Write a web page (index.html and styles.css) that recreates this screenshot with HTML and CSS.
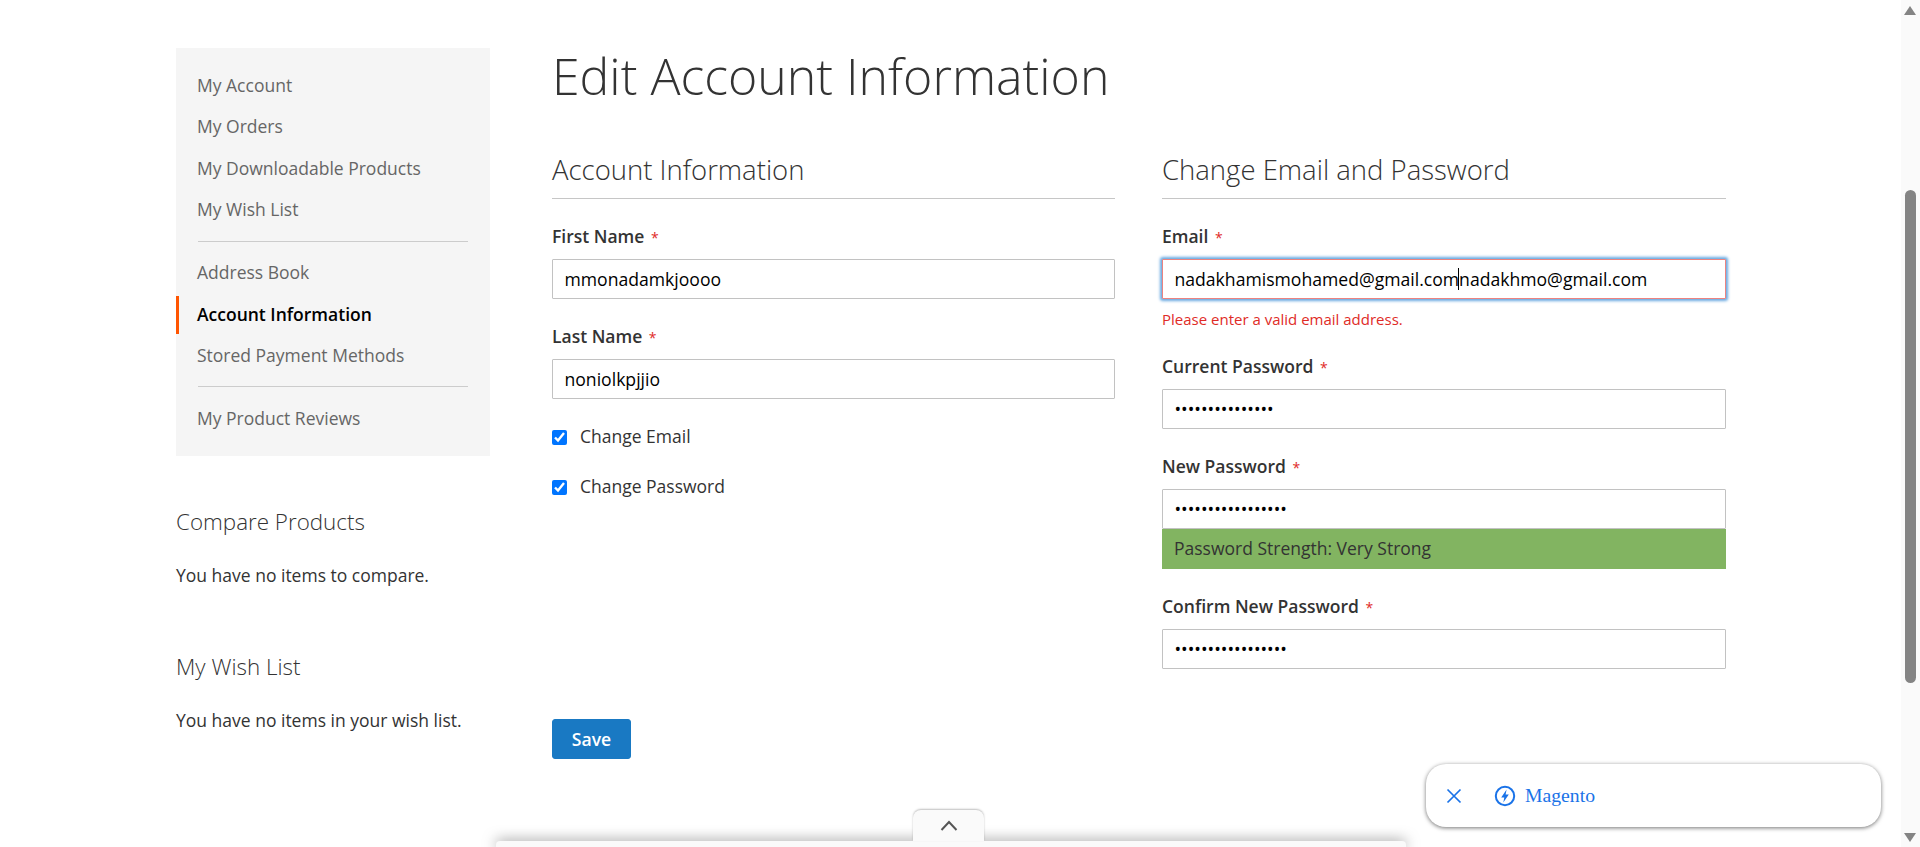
FILE: index.html
```html
<!DOCTYPE html>
<html lang="en">
<head>
<meta charset="utf-8">
<title>Edit Account Information</title>
<link rel="stylesheet" href="styles.css">
</head>
<body>
<div class="page">
  <div class="layout">
    <aside class="sidebar">
      <nav class="account-nav">
        <ul class="nav-list">
          <li class="nav-item">My Account</li>
          <li class="nav-item">My Orders</li>
          <li class="nav-item">My Downloadable Products</li>
          <li class="nav-item">My Wish List</li>
          <li class="nav-divider"></li>
          <li class="nav-item">Address Book</li>
          <li class="nav-item nav-current">Account Information</li>
          <li class="nav-item">Stored Payment Methods</li>
          <li class="nav-divider"></li>
          <li class="nav-item">My Product Reviews</li>
        </ul>
      </nav>
      <section class="side-block side-compare">
        <h2 class="side-title">Compare Products</h2>
        <p class="side-text">You have no items to compare.</p>
      </section>
      <section class="side-block side-wish">
        <h2 class="side-title">My Wish List</h2>
        <p class="side-text">You have no items in your wish list.</p>
      </section>
    </aside>
    <main class="main">
      <h1 class="page-title">Edit Account Information</h1>
      <form class="form">
        <div class="columns">
          <fieldset class="column">
            <legend class="legend">Account Information</legend>
            <div class="field">
              <label class="label" for="first">First Name <span class="req">*</span></label>
              <input class="input" id="first" type="text" value="mmonadamkjoooo">
            </div>
            <div class="field">
              <label class="label" for="last">Last Name <span class="req">*</span></label>
              <input class="input" id="last" type="text" value="noniolkpjjio">
            </div>
            <label class="check check-first"><input class="checkbox" type="checkbox" checked><span class="check-text">Change Email</span></label>
            <label class="check"><input class="checkbox" type="checkbox" checked><span class="check-text">Change Password</span></label>
          </fieldset>
          <fieldset class="column">
            <legend class="legend">Change Email and Password</legend>
            <div class="field">
              <label class="label" for="email">Email <span class="req">*</span></label>
              <div class="input-wrap">
                <input class="input input-focus" id="email" type="text" value="nadakhamismohamed@gmail.comnadakhmo@gmail.com">
                <span class="caret"></span>
              </div>
              <div class="error">Please enter a valid email address.</div>
            </div>
            <div class="field">
              <label class="label" for="cur">Current Password <span class="req">*</span></label>
              <input class="input" id="cur" type="password" value="aaaaaaaaaaaaaaa">
            </div>
            <div class="field">
              <label class="label" for="new">New Password <span class="req">*</span></label>
              <input class="input" id="new" type="password" value="aaaaaaaaaaaaaaaaa">
              <div class="strength">Password Strength: Very Strong</div>
            </div>
            <div class="field">
              <label class="label" for="conf">Confirm New Password <span class="req">*</span></label>
              <input class="input" id="conf" type="password" value="aaaaaaaaaaaaaaaaa">
            </div>
          </fieldset>
        </div>
        <button class="save" type="button">Save</button>
      </form>
    </main>
  </div>
</div>

<div class="dock">
  <div class="dock-tab">
    <svg class="dock-chevron" width="18" height="11" viewBox="0 0 18 11"><path d="M1.5 10 9 2l7.5 8" fill="none" stroke="#555" stroke-width="2"/></svg>
  </div>
</div>

<div class="pill">
  <svg class="pill-close" width="16" height="16" viewBox="0 0 16 16"><path d="M1.5 1.5l13 13M14.5 1.5l-13 13" fill="none" stroke="#1a73e8" stroke-width="1.7"/></svg>
  <svg class="pill-bolt" width="22" height="22" viewBox="0 0 22 22"><circle cx="11" cy="11" r="9.2" fill="none" stroke="#1a73e8" stroke-width="2"/><path d="M12.6 4.4 7.2 12.4h3.1l-1 5.2 5.5-8h-3.2z" fill="#1a73e8"/></svg>
  <span class="pill-text">Magento</span>
</div>

<div class="scrollbar">
  <span class="arrow-up"></span>
  <span class="thumb"></span>
  <span class="arrow-down"></span>
</div>
</body>
</html>
```
FILE: styles.css
```css
* { box-sizing: border-box; }
html, body { margin: 0; padding: 0; height: 100%; overflow: hidden; background: #fff; }
body { font-family: "Open Sans", "Liberation Sans", sans-serif; font-size: 17.5px; color: #333; }

.page { height: 847px; padding: 48px 0 0 176px; }
.layout { display: flex; gap: 62px; }

.sidebar { width: 314px; flex: none; }
.account-nav { background: #f5f5f5; height: 408px; padding: 19px 0; }
.nav-list { list-style: none; margin: 0; padding: 0; }
.nav-item { height: 38px; margin-bottom: 3.4px; padding-left: 21px; line-height: 36px; color: #666; }
.nav-current { border-left: 3px solid #ff5501; padding-left: 18px; color: #000; font-weight: 600; }
.nav-divider { height: 1px; margin: 11.5px 22px 12.5px; background: #ccc; }

.side-block { color: #333; }
.side-compare { margin-top: 51px; }
.side-wish { margin-top: 66px; }
.side-title { margin: 0; font-size: 22.4px; font-weight: 300; line-height: 30px; color: #333; }
.side-text { margin: 27px 0 0; line-height: 22px; }

.main { width: 1174px; flex: none; }
.page-title { margin: 0; font-size: 50px; font-weight: 300; line-height: 56px; color: #333; }
.form { margin-top: 48px; }
.columns { display: grid; grid-template-columns: 563px 564px; column-gap: 47px; align-items: start; }
.column { border: 0; margin: 0; padding: 0; min-width: 0; }
.legend { display: block; float: left; width: 100%; padding: 0 0 11px; margin: 0 0 27px; border-bottom: 1px solid #c6c6c6; font-size: 27.5px; font-weight: 300; line-height: 35px; color: #333; }
.field { clear: both; margin-bottom: 27px; }
.field:last-child { margin-bottom: 0; }
.label { display: block; font-weight: 600; line-height: 20px; margin-bottom: 13px; color: #333; }
.req { color: #e02b27; font-size: 14px; line-height: 0; margin-left: 2px; font-weight: 400; }

.input { display: block; width: 100%; height: 40px; padding: 0 12px 0 11.5px; border: 1px solid #c2c2c2; border-radius: 1px; background: #fff; font: 17.6px "Open Sans", "Liberation Sans", sans-serif; color: #000; outline: 0; }
.input-wrap { position: relative; }
.input-focus { border-color: #ed8380; box-shadow: 0 0 3px 2px #68a8e0; }
.caret { position: absolute; left: 296px; top: 9px; width: 1px; height: 22px; background: #000; }
.error { margin-top: 10px; font-size: 15px; line-height: 20px; color: #e02b27; }
.strength { height: 40px; padding-left: 12px; line-height: 38px; background: #82b461; color: #333; }

.check { display: flex; align-items: center; gap: 13px; line-height: 22px; margin-bottom: 28px; color: #333; }
.check-first { margin-top: 27px; clear: both; }
.check-text { line-height: 20px; padding-bottom: 2px; }
.checkbox { width: 15px; height: 15px; margin: 0; flex: none; }

.save { display: block; width: 79px; height: 40px; margin-top: 50px; padding: 0; border: 1px solid #1979c3; border-radius: 3px; background: #1979c3; color: #fff; font: 600 17.6px "Open Sans", "Liberation Sans", sans-serif; }

.dock { position: absolute; left: 496px; top: 841px; width: 910px; height: 6px; background: #fafafa; border-radius: 4px 4px 0 0; box-shadow: 0 0 14px rgba(0,0,0,.55); }
.dock-tab { position: absolute; left: 417px; top: -31px; width: 71px; height: 31px; display: flex; align-items: center; justify-content: center; background: #fafafa; border-radius: 8px 8px 0 0; box-shadow: 0 -1px 2px rgba(0,0,0,.25); }

.pill { position: absolute; left: 1426px; top: 764px; width: 455px; height: 63px; display: flex; align-items: center; padding-left: 20px; background: #fff; border-radius: 20px; box-shadow: 0 1px 4px rgba(0,0,0,.55); }
.pill-bolt { margin-left: 32px; }
.pill-text { margin-left: 9px; font: 19.7px "Liberation Serif", serif; color: #1a73e8; }

.scrollbar { position: absolute; right: 0; top: 0; width: 19px; height: 847px; background: #fafafa; }
.arrow-up, .arrow-down, .thumb { position: absolute; display: block; }
.arrow-up { left: 3px; top: 6px; width: 0; height: 0; border-left: 6px solid transparent; border-right: 6px solid transparent; border-bottom: 9px solid #848484; }
.arrow-down { left: 3px; top: 833px; width: 0; height: 0; border-left: 6px solid transparent; border-right: 6px solid transparent; border-top: 9px solid #848484; }
.thumb { left: 4px; top: 190px; width: 11px; height: 493px; border-radius: 6px; background: #848484; }
```
